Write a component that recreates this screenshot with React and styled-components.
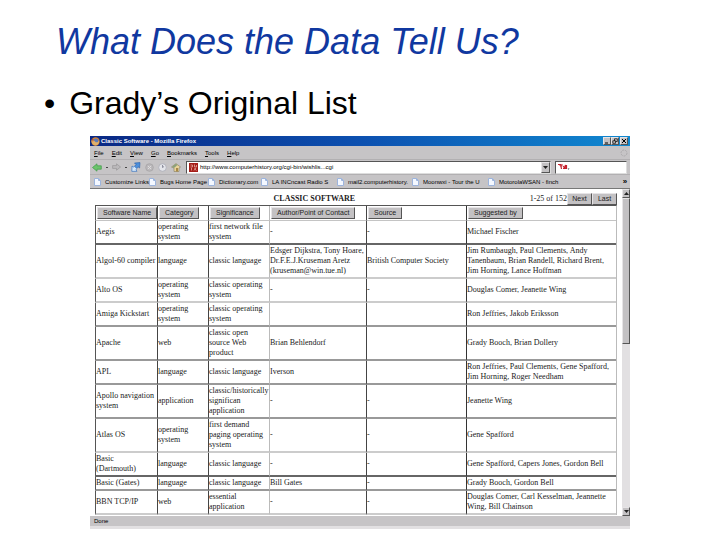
import React from 'react'
import styled, { createGlobalStyle, css } from 'styled-components'

const bookmarks = [
    'Customize Links',
    'Bugs Home Page',
    'Dictionary.com',
    'LA INCncast Radio S',
    'mail2.computerhistory.',
    'Moonwxi - Tour the U',
    'MotorolaWSAN - finch',
]

const menus = ['File', 'Edit', 'View', 'Go', 'Bookmarks', 'Tools', 'Help']

// widths are shares of the whole table
const columns = [
    { label: 'Software Name', width: 62, line: '#555' },
    { label: 'Category', width: 51, line: '#444' },
    { label: 'Significance', width: 61, line: '#444' },
    { label: 'Author/Point of Contact', width: 97, line: '#bbb' },
    { label: 'Source', width: 100, line: '#444' },
    { label: 'Suggested by', width: 150, line: '#333' },
]

const totalWidth = columns.reduce((sum, { width }) => sum + width, 0)

const rows = [
    { line: 'dark', cells: ['Aegis', 'operating system', 'first network file\nsystem', '-', '-', 'Michael Fischer'] },
    { line: 'light', cells: ['Algol-60 compiler', 'language', 'classic language', 'Edsger Dijkstra, Tony Hoare,\nDr.F.E.J.Kruseman Aretz\n(kruseman@win.tue.nl)', 'British Computer Society', 'Jim Rumbaugh, Paul Clements, Andy\nTanenbaum, Brian Randell, Richard Brent,\nJim Horning, Lance Hoffman'] },
    { line: 'light', cells: ['Alto OS', 'operating system', 'classic operating\nsystem', '-', '-', 'Douglas Comer, Jeanette Wing'] },
    { line: 'mid', cells: ['Amiga Kickstart', 'operating system', 'classic operating\nsystem', '', '', 'Ron Jeffries, Jakob Eriksson'] },
    { line: 'mid', cells: ['Apache', 'web', 'classic open\nsource Web\nproduct', 'Brian Behlendorf', '', 'Grady Booch, Brian Dollery'] },
    { line: 'mid', cells: ['APL', 'language', 'classic language', 'Iverson', '', 'Ron Jeffries, Paul Clements, Gene Spafford,\nJim Horning, Roger Needham'] },
    { line: 'mid', cells: ['Apollo navigation\nsystem', 'application', 'classic/historically\nsignifican\napplication', '-', '-', 'Jeanette Wing'] },
    { line: 'light', cells: ['Atlas OS', 'operating system', 'first demand\npaging operating\nsystem', '-', '-', 'Gene Spafford'] },
    { line: 'dark', cells: ['Basic\n(Dartmouth)', 'language', 'classic language', '-', '-', 'Gene Spafford, Capers Jones, Gordon Bell'] },
    { line: 'mid', cells: ['Basic (Gates)', 'language', 'classic language', 'Bill Gates', '-', 'Grady Booch, Gordon Bell'] },
    { line: 'light', cells: ['BBN TCP/IP', 'web', 'essential\napplication', '-', '-', 'Douglas Comer, Carl Kesselman, Jeannette\nWing, Bill Chainson'] },
]

const PageIcon = () => (
    <svg width="7" height="8" viewBox="0 0 7 8" aria-hidden="true">
        <path d="M.5 .5H4.5L6.5 2.5V7.5H.5Z" fill="#f4f8ff" stroke="#9db4dc" />
        <path d="M4.5 .5V2.5H6.5" fill="none" stroke="#9db4dc" />
    </svg>
)

const FirefoxIcon = () => (
    <svg width="9" height="9" viewBox="0 0 9 9" aria-hidden="true">
        <circle cx="4.5" cy="4.5" r="4.2" fill="#d8832e" />
        <circle cx="4.8" cy="4" r="2.6" fill="#5b79b8" />
        <path d="M1 2C2 4 3 3 4 4.5C5 6 7 5.5 8 3.5C8.5 7 6 9 3.5 8.3C1 7.5 0 5 1 2Z" fill="#e0b06a" />
        <path d="M.8 1.5L2.5 2.5L2 5Z" fill="#b9401c" />
    </svg>
)

const BackIcon = () => (
    <svg width="10" height="9" viewBox="0 0 10 9" aria-hidden="true">
        <path d="M.5 4.5L5 .8V2.8H9.3V6.2H5V8.2Z" fill="#6cc46c" stroke="#3f9b48" strokeWidth=".7" />
    </svg>
)

const ForwardIcon = () => (
    <svg width="9" height="8" viewBox="0 0 9 8" aria-hidden="true">
        <path d="M8.5 4L4.5 .8V2.6H.6V5.4H4.5V7.2Z" fill="#bcbabc" stroke="#989698" strokeWidth=".7" />
    </svg>
)

const ReloadIcon = () => (
    <svg width="10" height="10" viewBox="0 0 10 10" aria-hidden="true">
        <path d="M3.5 1L9 .6L8.6 6L7 4.8L5 7L3 5L5 2.6Z" fill="#4d90dc" stroke="#245ba8" strokeWidth=".6" />
        <path d="M1 4L2.4 5L3.4 4.2L6 6.8L5 7.8L6 9.3L.8 9.4Z" fill="#d5e8fa" stroke="#3a73bd" strokeWidth=".7" />
    </svg>
)

const StopIcon = () => (
    <svg width="9" height="9" viewBox="0 0 9 9" aria-hidden="true">
        <circle cx="4.5" cy="4.5" r="3.8" fill="#bbb9bb" stroke="#a3a1a3" strokeWidth=".7" />
        <path d="M3 3L6 6M6 3L3 6" stroke="#dedcde" />
    </svg>
)

const HistoryIcon = () => (
    <svg width="9" height="9" viewBox="0 0 9 9" aria-hidden="true">
        <circle cx="4.5" cy="4.5" r="3.8" fill="#e4e5ea" stroke="#a6a8b4" strokeWidth=".7" />
        <path d="M4.5 2V4.5L6 3.5" fill="none" stroke="#77798a" strokeWidth=".8" />
    </svg>
)

const HomeIcon = () => (
    <svg width="10" height="9" viewBox="0 0 10 9" aria-hidden="true">
        <path d="M.5 4L5 .6L9.5 4L8 5V8.5H3V5Z" fill="#e9d49a" stroke="#857c62" strokeWidth=".6" />
        <path d="M.8 4L5 .8L6.5 2L3 5Z" fill="#8aa07a" />
        <rect x="5" y="5" width="2" height="3.5" fill="#a88948" />
    </svg>
)

const SiteIcon = () => (
    <svg width="9" height="9" viewBox="0 0 9 9" aria-hidden="true">
        <rect width="9" height="9" fill="#a51d18" />
        <path d="M1.5 2H3.5V4H1.5M5.5 1.5V4H7.5V2M2.5 5V7.5M5 5.5L7.5 7.5M7 5L5 7.5" fill="none" stroke="#e6aaa0" strokeWidth=".8" />
    </svg>
)

const SearchLogo = () => (
    <svg width="12" height="8" viewBox="0 0 12 8" aria-hidden="true">
        <path d="M0 1.5H3.5M1.5 1.5L3 3.5L4.5 1.5M3 3.5L3.5 6M5 3L6.5 5L7.5 2L8 5M8.5 2V5M5 5.5H9" fill="none" stroke="#c5202c" strokeWidth="1.2" />
        <path d="M9.5 5.5H11.5L10.5 6.8Z" fill="#333" />
    </svg>
)

const Throbber = () => (
    <svg width="8" height="8" viewBox="0 0 8 8" aria-hidden="true">
        <circle cx="4" cy="4" r="3" fill="none" stroke="#adabad" strokeDasharray="2 1" />
    </svg>
)

const Arrow = ({ up }) => (
    <svg width="5" height="3" viewBox="0 0 5 3" aria-hidden="true">
        <path d={up ? 'M0 3L2.5 0L5 3Z' : 'M0 0L2.5 3L5 0Z'} fill="#222" />
    </svg>
)

const App = () => {
    return (
        <Slide>
            <GlobalStyle />
            <Title>What Does the Data Tell Us?</Title>
            <Points>
                <li>Grady’s Original List</li>
            </Points>
            <Browser>
                <TitleBar>
                    <FirefoxIcon />
                    <Caption>Classic Software - Mozilla Firefox</Caption>
                    <WindowButton aria-label="Minimize">
                        <svg width="6" height="6" viewBox="0 0 6 6"><path d="M1 5H4" stroke="#000" /></svg>
                    </WindowButton>
                    <WindowButton aria-label="Restore">
                        <svg width="6" height="6" viewBox="0 0 6 6"><path d="M2.5 3V.8H5.3V3.5H4M.8 2.8H3.5V5.3H.8Z" fill="none" stroke="#000" strokeWidth=".7" /></svg>
                    </WindowButton>
                    <WindowButton aria-label="Close" $apart>
                        <svg width="6" height="6" viewBox="0 0 6 6"><path d="M1 1L5 5M5 1L1 5" stroke="#000" /></svg>
                    </WindowButton>
                </TitleBar>
                <MenuBar>
                    {menus.map((menu) => (
                        <MenuButton key={menu}><u>{menu[0]}</u>{menu.slice(1)}</MenuButton>
                    ))}
                    <Spacer />
                    <Throbber />
                </MenuBar>
                <NavBar>
                    <NavButtons>
                        <ToolButton aria-label="Back"><BackIcon /></ToolButton>
                        <Dot />
                        <ToolButton aria-label="Forward"><ForwardIcon /></ToolButton>
                        <Dot />
                        <ToolButton aria-label="Reload"><ReloadIcon /></ToolButton>
                        <ToolButton aria-label="Stop"><StopIcon /></ToolButton>
                        <ToolButton aria-label="History"><HistoryIcon /></ToolButton>
                        <ToolButton aria-label="Home"><HomeIcon /></ToolButton>
                    </NavButtons>
                    <Field $grow={368}>
                        <SiteIcon />
                        <input type="text" aria-label="Address" defaultValue="http://www.computerhistory.org/cgi-bin/wishlis...cgi" />
                        <DropButton aria-label="Show addresses"><Arrow /></DropButton>
                    </Field>
                    <Field $grow={69}>
                        <SearchLogo />
                        <input type="text" aria-label="Search" />
                    </Field>
                </NavBar>
                <BookmarkBar>
                    {bookmarks.map((name) => (
                        <Bookmark href="#" key={name}><PageIcon />{name}</Bookmark>
                    ))}
                    <More aria-label="More bookmarks">»</More>
                </BookmarkBar>
                <Viewport>
                    <Page>
                        <ListHeader>
                            <h2>CLASSIC SOFTWARE</h2>
                            <Pager>
                                1-25 of 152
                                <PageButton>Next</PageButton>
                                <PageButton>Last</PageButton>
                            </Pager>
                        </ListHeader>
                        <Table>
                            <thead>
                                <tr>
                                    {columns.map(({ label, width, line }) => (
                                        <HeadCell key={label} $width={width} $side={line}>
                                            <SortButton>{label}</SortButton>
                                        </HeadCell>
                                    ))}
                                </tr>
                            </thead>
                            <tbody>
                                {rows.map(({ line, cells }) => (
                                    <tr key={cells[0]}>
                                        {cells.map((text, i) => (
                                            <Cell key={columns[i].label} $side={columns[i].line} $line={line}>{text}</Cell>
                                        ))}
                                    </tr>
                                ))}
                            </tbody>
                        </Table>
                    </Page>
                    <ScrollBar>
                        <ScrollButton aria-label="Scroll up"><Arrow up /></ScrollButton>
                        <Thumb />
                        <Track />
                        <ScrollButton aria-label="Scroll down"><Arrow /></ScrollButton>
                    </ScrollBar>
                </Viewport>
                <StatusBar>Done</StatusBar>
            </Browser>
        </Slide>
    )
}

export default App

const GlobalStyle = createGlobalStyle`
    * {
        box-sizing: border-box;
    }

    body {
        margin: 0;
        background: #fff;
        color: #000;
        font-family: "Liberation Sans", Arial, sans-serif;
    }

    button {
        margin: 0;
        padding: 0;
        border: none;
        background: none;
        color: inherit;
        font: inherit;
    }

    svg {
        display: block;
        flex: none;
    }
`

const raised = css`
    background: #c3c1c3;
    border: 1px solid;
    border-color: #e6e4e6 #555 #555 #e6e4e6;
`

const Slide = styled.main`
    padding: 20px 90px 12px 44px;
`

const Title = styled.h1`
    margin: 0 0 0 12px;
    color: #1038a0;
    font-size: 36px;
    font-style: italic;
    font-weight: 400;
    line-height: 44px;
    white-space: nowrap;
`

const Points = styled.ul`
    margin: 20px 0 14px;
    padding: 0;
    list-style: none;
    font-size: 32px;
    line-height: 38px;

    li {
        display: flex;
        gap: 14px;
    }

    li::before {
        content: '•';
    }
`

const Browser = styled.section`
    margin-left: 46px;
    background: #c6c4c6;
    border-bottom: 3px solid #e2e0e2;
    font-size: 6px;
    line-height: 10px;
`

const TitleBar = styled.header`
    display: flex;
    align-items: center;
    height: 10px;
    padding: 0 2px 0 1px;
    background: linear-gradient(90deg, #0a2884, #0c50b0 50%, #1088d0);
    color: #fff;
`

const Caption = styled.span`
    flex: 1;
    padding-left: 1px;
    font-weight: 700;
`

const WindowButton = styled.button`
    ${raised}
    display: flex;
    align-items: center;
    justify-content: center;
    width: 8px;
    height: 8px;
    margin-left: ${({ $apart }) => ($apart ? '1px' : '0')};
`

const MenuBar = styled.nav`
    display: flex;
    align-items: center;
    gap: 8px;
    height: 13px;
    padding: 0 2px 0 4px;
`

const MenuButton = styled.button`
    flex: none;
`

const Spacer = styled.span`
    flex: 1;
`

const NavBar = styled.div`
    display: flex;
    align-items: center;
    gap: 4px;
    height: 15px;
    padding: 0 3px 0 2px;
    border-top: 1px solid #b2b0b2;
`

const NavButtons = styled.div`
    display: flex;
    align-items: center;
    gap: 4px;
    width: 90px;
`

const ToolButton = styled.button`
    flex: none;
`

const Dot = styled.span`
    width: 2px;
    height: 1px;
    background: #444;
`

const Field = styled.div`
    display: flex;
    align-items: center;
    flex: ${({ $grow }) => $grow} 1 0;
    min-width: 0;
    height: 13px;
    padding-left: 2px;
    background: #fff;
    border: 1px solid;
    border-color: #555 #ddd #ddd #555;

    input {
        flex: 1;
        min-width: 0;
        height: 10px;
        padding: 0 2px;
        background: none;
        border: none;
        font: inherit;
    }
`

const DropButton = styled.button`
    ${raised}
    display: flex;
    align-items: center;
    justify-content: center;
    width: 9px;
    height: 11px;
`

const BookmarkBar = styled.nav`
    display: grid;
    grid-template-columns: 55fr 59fr 53fr 76fr 75fr 76fr 132fr 10fr;
    align-items: center;
    height: 14px;
    padding-left: 4px;
    border-top: 1px solid #b2b0b2;
`

const Bookmark = styled.a`
    display: flex;
    align-items: center;
    gap: 4px;
    min-width: 0;
    color: #000;
    text-decoration: none;
    white-space: nowrap;
`

const More = styled.button`
    font-size: 8px;
    font-weight: 700;
`

const Viewport = styled.div`
    display: flex;
    background: #fff;
    border-top: 1px solid #777;
`

const Page = styled.div`
    flex: 1;
    min-width: 0;
    padding: 4px 5px 1px;
    font-family: "Liberation Serif", "Times New Roman", serif;
    font-size: 8px;
    color: #222;
`

const ListHeader = styled.div`
    display: grid;
    grid-template-columns: 1fr auto;
    align-items: center;
    height: 12px;

    h2 {
        margin: 0;
        padding-left: 4px;
        font-size: 8px;
        font-weight: 700;
        text-align: center;
    }
`

const Pager = styled.div`
    display: flex;
    align-items: center;
`

const PageButton = styled.button`
    ${raised}
    width: 25px;
    height: 12px;
    font-family: "Liberation Sans", Arial, sans-serif;
    font-size: 7px;
    line-height: 10px;
`

const Table = styled.table`
    width: 100%;
    table-layout: fixed;
    border-collapse: separate;
    border-spacing: 0;
    border-top: 1px solid #555;
    border-right: 1px solid #bbb;
    font-size: 8px;
    line-height: 10px;
`

const HeadCell = styled.th`
    width: calc(100% * ${({ $width }) => $width} / ${totalWidth});
    padding: 1px;
    border-left: 1px solid ${({ $side }) => $side};
    border-bottom: 1px solid #c4c4c4;
    font-weight: 400;
    text-align: left;
`

const SortButton = styled.button`
    ${raised}
    display: block;
    height: 12px;
    padding: 0 5px;
    font-family: "Liberation Sans", Arial, sans-serif;
    font-size: 7px;
    white-space: nowrap;
`

const lines = {
    light: '#ccc',
    mid: '#999',
    dark: '#666',
}

const Cell = styled.td`
    padding: 1px 0;
    border-left: 1px solid ${({ $side }) => $side};
    border-bottom: 2px solid ${({ $line }) => lines[$line]};
    vertical-align: middle;
    white-space: pre-line;
`

const ScrollBar = styled.div`
    display: flex;
    flex-direction: column;
    width: 8px;
    background: #e2e0e2;
`

const ScrollButton = styled.button`
    ${raised}
    display: flex;
    align-items: center;
    justify-content: center;
    height: 9px;
`

const Thumb = styled.div`
    ${raised}
    flex: 144;
`

const Track = styled.div`
    flex: 164;
`

const StatusBar = styled.footer`
    height: 10px;
    padding-left: 4px;
`
